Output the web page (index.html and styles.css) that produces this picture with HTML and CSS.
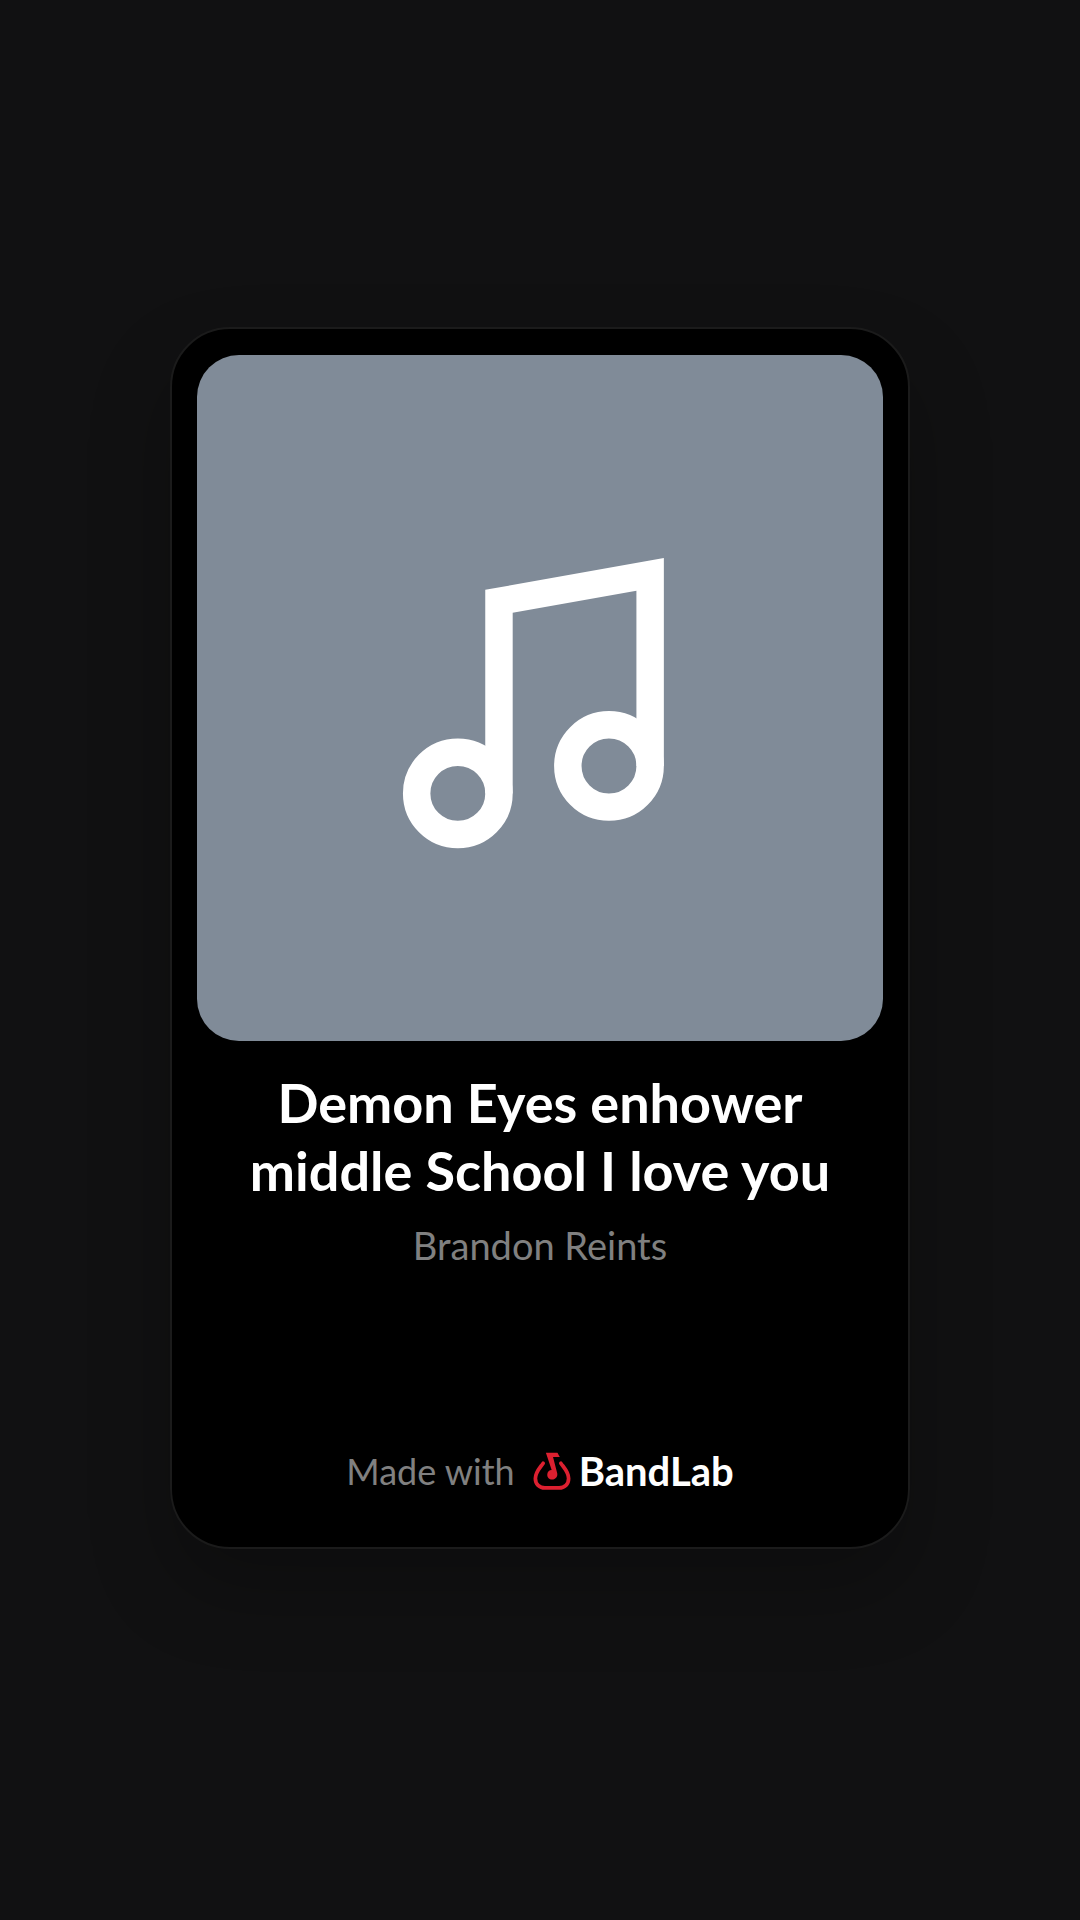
FILE: index.html
```html
<!DOCTYPE html>
<html lang="en">
<head>
    <meta charset="UTF-8">
    <meta name="viewport" content="width=device-width, initial-scale=1.0">
    <title>Demon Eyes enhower middle School I love you</title>
    <link rel="stylesheet" href="styles.css">
</head>
<body>
    <main class="card">
        <div class="cover">
            <svg class="note" viewBox="-28 -25 330 330" aria-hidden="true">
                <g fill="none" stroke="#fff" stroke-width="27.5">
                    <circle cx="55" cy="236" r="41.25"/>
                    <circle cx="206.5" cy="208.5" r="41.25"/>
                </g>
                <path fill="#fff" d="M82.5 236V32L261.5 0v208.5H234V33L110 55v181z"/>
            </svg>
        </div>
        <h1 class="title">Demon Eyes enhower middle School I love you</h1>
        <p class="artist">Brandon Reints</p>
        <footer class="made">
            <span class="made-text">Made with</span>
            <!-- BandLab logo -->
            <svg class="logo" viewBox="8 13 112 112" aria-hidden="true">
                <path fill="none" stroke="#dc2030" stroke-width="11" stroke-linecap="round" stroke-linejoin="round" d="M38 46C29 59 15 72 15 91c0 17 12 28 28 28h42c16 0 28-11 28-28 0-19-14-32-23-45"/>
                <path fill="#dc2030" d="M46 15h34l7 13H67l12 46c3 11-4 20-15 20-8 0-14-6-14-14 0-9 6-14 13-14z"/>
            </svg>
            <span class="brand">BandLab</span>
        </footer>
    </main>
</body>
</html>
```
FILE: styles.css
```css
* {
    box-sizing: border-box;
}
body {
    margin: 0;
    min-height: 100vh;
    padding: 327px 20px 60px;
    background-color: #111112;
    color: #fff;
    font-family: Lato, "Liberation Sans", sans-serif;
}
.card {
    display: flex;
    flex-direction: column;
    align-items: center;
    max-width: 740px;
    min-height: 1222px;
    margin: 0 auto;
    padding: 26px 25px 52px;
    border: 2px solid #1b1b1b;
    border-radius: 60px;
    background-color: #000;
    box-shadow: 0 40px 80px rgba(0, 0, 0, 0.25);
}
.cover {
    display: flex;
    align-items: center;
    justify-content: center;
    width: 100%;
    aspect-ratio: 1;
    border-radius: 42px;
    background-color: #808b98;
}
.note {
    width: 48%;
}
.title {
    max-width: 620px;
    margin: 28px 0 0;
    font-size: 54px;
    font-weight: 700;
    line-height: 68px;
    text-align: center;
}
.artist {
    margin: 16px 0 0;
    color: #808080;
    font-size: 38px;
    line-height: 48px;
}
.made {
    display: flex;
    align-items: center;
    margin-top: auto;
}
.made-text {
    color: #808080;
    font-size: 36px;
    line-height: 48px;
}
.logo {
    width: 38px;
    margin: 0 8px 0 18px;
}
.brand {
    font-size: 40px;
    font-weight: 700;
    line-height: 48px;
}
```
